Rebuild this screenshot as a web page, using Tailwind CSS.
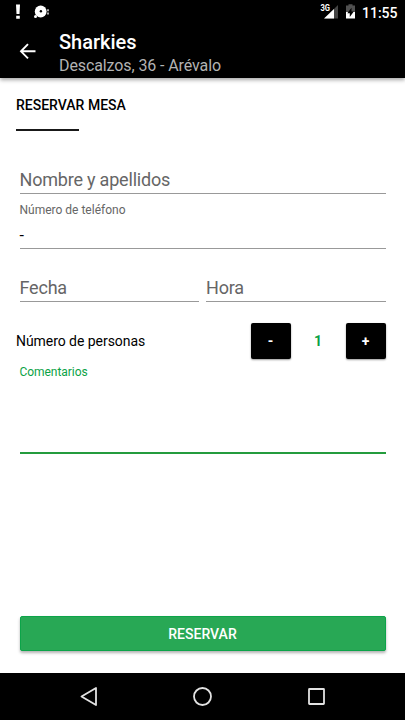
<!DOCTYPE html>
<html lang="es">
<head>
<meta charset="utf-8">
<title>Reservar mesa</title>
<script src="https://cdn.jsdelivr.net/npm/@tailwindcss/browser@4"></script>
</head>
<body class="w-[405px] h-[720px] overflow-hidden bg-white flex flex-col font-[Roboto,sans-serif] text-black">
  <header class="h-[78px] shrink-0 bg-black text-white shadow-[0_2px_4px_rgba(0,0,0,0.35)]">
    <div class="h-6 flex items-center justify-between pl-4 pr-[7.500px]">
      <svg class="w-[36px] h-6" viewBox="16 0 36 24" fill="#fff">
        <path d="M16 4.500h4l-.5 9.500h-3zM16.200 15.700h3.600v3h-3.600z"/>
        <circle cx="40.700" cy="11.500" r="5.900"/>
        <circle cx="40.900" cy="11.300" r="1.200" fill="#000"/>
        <circle cx="35.500" cy="16.400" r="1.500"/>
        <path d="M47 9.200h2v2h-2zM47 12.400h2v2h-2z" fill="#aaa"/>
      </svg>
      <div class="flex items-center">
        <svg class="w-[38px] h-6" viewBox="320 0 38 24">
          <path d="M338 5v13.500h-13.500z" fill="#444"/>
          <path d="M334 9v9.500h-10z" fill="#fff"/>
          <text x="320.500" y="11" font-size="8.500" font-weight="700" fill="#fff" textLength="9.500" lengthAdjust="spacingAndGlyphs">3G</text>
          <path d="M346 5.500h2.500V4.200h4v1.300h2.500v6.500h-9z" fill="#505050"/>
          <path d="M346 12h9v6.500h-9z" fill="#fff"/>
          <path d="M351.500 7.800l-4.200 5.400h2.500V17l4-5.500h-2.300z" fill="#000"/>
        </svg>
        <span class="ml-[4px] pt-px text-[14px] leading-6 font-medium">11:55</span>
      </div>
    </div>
    <div class="flex h-[54px]">
      <svg class="w-[59px] h-[54px]" viewBox="0 24 59 54" fill="none" stroke="#fff" stroke-width="1.900"><path d="M35.500 51.300H21M28 44.200l-7 7.100 7 7.100"/></svg>
      <div class="pt-[6px]">
        <h1 class="text-[20px] leading-6 font-medium">Sharkies</h1>
        <p class="text-[16px] leading-6 tracking-[-0.1px] text-[#b3b3b3]">Descalzos, 36 - Arévalo</p>
      </div>
    </div>
  </header>
  <main class="h-[595px] shrink-0 flex flex-col pl-4 pr-[19.500px]">
    <h2 class="mt-[16px] h-[21px] leading-[23px] text-[14px] font-medium">RESERVAR MESA</h2>
    <div class="mt-[14px] w-[63px] h-[2px] bg-black/90"></div>
    <div class="ml-[3.500px] mt-[35px] h-[28px] border-b border-[#999] text-[18px] leading-[27px] tracking-[-0.2px] text-[#666]">Nombre y apellidos</div>
    <div class="ml-[3.500px] mt-[7px] h-[16px] text-[12px] leading-[18px] text-[#666]">Número de teléfono</div>
    <div class="ml-[3.500px] mt-[8px] h-[24px] border-b border-[#999] text-[16px] leading-[22px]">-</div>
    <div class="ml-[3.500px] mt-[25px] h-[28px] flex gap-[7px] text-[18px] leading-[27px] tracking-[-0.200px] text-[#666]">
      <div class="flex-1 border-b border-[#999]">Fecha</div>
      <div class="flex-1 border-b border-[#999]">Hora</div>
    </div>
    <div class="mt-[21px] h-9 flex items-center text-[14px]">
      <span class="flex-1 pt-px tracking-[-0.05px]">Número de personas</span>
      <button class="w-10 h-9 rounded-[2px] bg-black text-white font-bold shadow-[0_1px_2px_rgba(0,0,0,0.4)]">-</button>
      <span class="w-[55px] text-center font-bold text-[#0ba246]">1</span>
      <button class="w-10 h-9 rounded-[2px] bg-black text-white font-bold shadow-[0_1px_2px_rgba(0,0,0,0.4)]">+</button>
    </div>
    <div class="ml-[3.500px] mt-[4px] h-[91px] border-b-2 border-[#249c3d] text-[12px] leading-[18px] tracking-[-0.05px] text-[#0ba246]">Comentarios</div>
    <button class="ml-[3.500px] mt-auto mb-[22px] h-[35px] rounded-[2px] border border-[#0ca449] bg-[#28a855] pt-px text-white text-[14px] font-medium shadow-[0_2px_3px_rgba(0,0,0,0.3)]">RESERVAR</button>
  </main>
  <nav class="h-[47px] shrink-0 bg-black">
    <svg class="w-[405px] h-[47px]" viewBox="0 673 405 47" fill="none" stroke="#e2e2e2" stroke-width="1.800">
      <path d="M96 688v17l-14.500-8.500z" stroke-linejoin="round"/>
      <circle cx="202.500" cy="696.500" r="8.500"/>
      <rect x="309" y="689" width="15" height="15" rx=".5"/>
    </svg>
  </nav>
</body>
</html>
